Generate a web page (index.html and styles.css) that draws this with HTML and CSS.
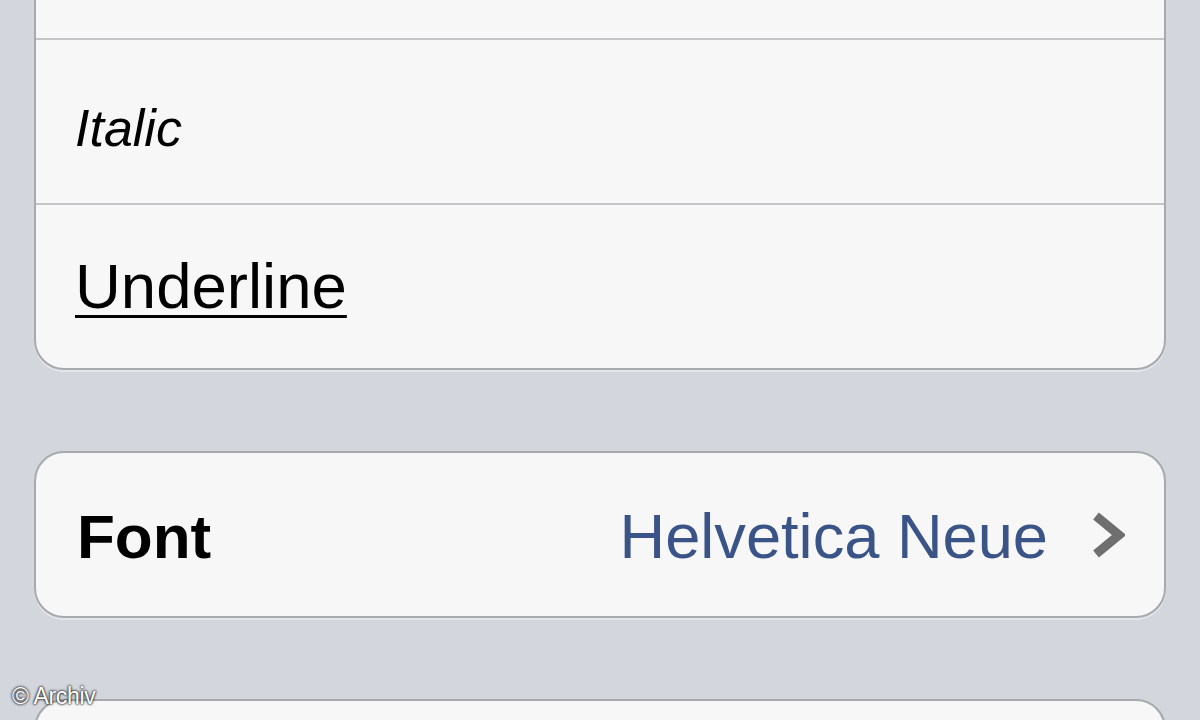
FILE: index.html
```html
<!DOCTYPE html>
<html lang="de">
<head>
<meta charset="utf-8">
<title>Text Style</title>
<link rel="stylesheet" href="styles.css">
</head>
<body>
<div class="screen">
  <div class="group">
    <div class="row"></div>
    <div class="row"><span class="label italic">Italic</span></div>
    <div class="row"><span class="label underline">Underline</span></div>
  </div>
  <div class="group">
    <div class="row">
      <span class="label font-label">Font</span>
      <span class="value">Helvetica Neue</span>
      <svg class="chevron" width="34" height="48" viewBox="0 0 34 48" aria-hidden="true">
        <path d="M5 5 L28 24 L5 43" fill="none" stroke="#6f6f6f" stroke-width="9" stroke-linejoin="miter"/>
      </svg>
    </div>
  </div>
  <div class="group">
    <div class="row"></div>
  </div>
</div>
<div class="credit">© Archiv</div>
</body>
</html>
```

FILE: styles.css
```css
html, body {
  margin: 0;
  padding: 0;
  height: 100%;
  overflow: hidden;
}

body {
  background: #d3d6dd;
  font-family: "Liberation Sans", Arial, sans-serif;
  color: #000;
  position: relative;
}

.screen {
  margin-top: -127px;
  padding: 0 34px;
  display: flex;
  flex-direction: column;
  gap: 81px;
}

.group {
  background: #f7f7f7;
  border: 2px solid #a7a9ad;
  border-radius: 30px;
  overflow: hidden;
  box-shadow: 0 2px 0 #e4e6ea;
}

.row {
  height: 163px;
  display: flex;
  align-items: center;
  padding: 0 40px 0 39px;
  border-top: 2px solid #c4c4c6;
}

.row:first-child {
  border-top: none;
}

.label {
  font-size: 60px;
  line-height: 1;
}

.italic {
  font-style: italic;
  font-size: 52px;
  margin-left: 0;
  margin-top: 12px;
}

.underline {
  font-size: 63.5px;
  text-decoration: underline;
  text-decoration-thickness: 3px;
  text-underline-offset: 7px;
}

.font-label {
  font-weight: bold;
  font-size: 62px;
  margin-left: 2px;
  margin-top: 4px;
}

.value {
  margin-left: auto;
  margin-top: 4px;
  margin-right: 3px;
  font-size: 63.2px;
  line-height: 1;
  color: #3a5488;
}

.chevron {
  margin-left: 40px;
  margin-right: -1px;
  flex-shrink: 0;
}

.credit {
  position: absolute;
  left: 12px;
  top: 683px;
  font-size: 23px;
  letter-spacing: -0.3px;
  color: #fff;
  text-shadow: 0 0 3px #000, 0 0 2px #222;
}
```
